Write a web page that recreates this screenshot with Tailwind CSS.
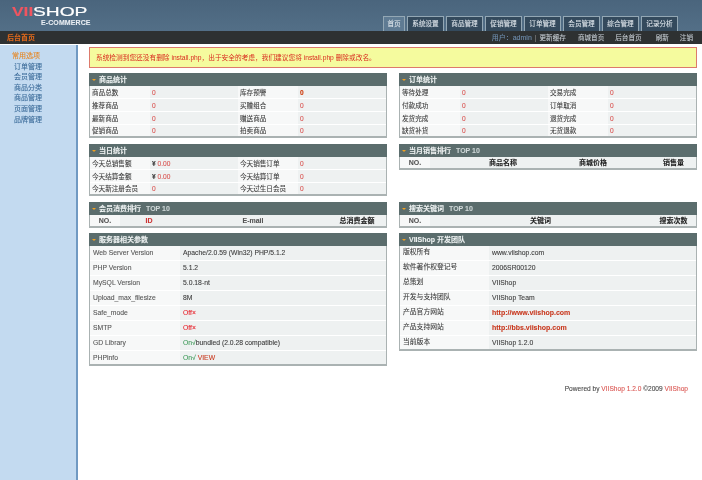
<!DOCTYPE html>
<html><head><meta charset="utf-8">
<script src="https://cdn.jsdelivr.net/npm/@tailwindcss/browser@4"></script>
</head>
<body class="w-[702px] h-[480px] overflow-hidden bg-white">
<div class="blur-[0.25px] [-webkit-text-stroke:0.08px] w-[702px] h-[480px] text-[#3a3a3a] text-[6.6px] leading-[13px] font-['Liberation_Sans','Noto_Sans_CJK_SC',sans-serif]">
<header class="h-[31px] bg-gradient-to-b from-[#4a657d] to-[#536f87] flex justify-between">
  <div class="pl-[12px] pt-[6px] w-[120px] font-bold leading-none">
    <div class="flex h-[12px] text-[12px] leading-[12px]"><span class="w-[21px] text-[#f05560] origin-left scale-x-[1.45]">VII</span><span class="text-white origin-left scale-x-[1.6] font-normal [-webkit-text-stroke:0.2px]">SHOP</span></div>
    <div class="text-[7px] text-[#e8edf2] pl-[29px] leading-[9px] tracking-[0.1px]">E-COMMERCE</div>
  </div>
  <nav class="flex items-end gap-[2px] pr-[24px] text-[#dfe6ec]">
    <div class="w-[22px] h-[15px] border border-b-0 border-[#93a7b4] bg-[#5f7b93] text-center leading-[14px]">首页</div>
    <div class="w-[37px] h-[15px] border border-b-0 border-[#93a7b4] bg-[#344a5d] text-center leading-[14px]">系统设置</div>
    <div class="w-[37px] h-[15px] border border-b-0 border-[#93a7b4] bg-[#344a5d] text-center leading-[14px]">商品管理</div>
    <div class="w-[37px] h-[15px] border border-b-0 border-[#93a7b4] bg-[#344a5d] text-center leading-[14px]">促销管理</div>
    <div class="w-[37px] h-[15px] border border-b-0 border-[#93a7b4] bg-[#344a5d] text-center leading-[14px]">订单管理</div>
    <div class="w-[37px] h-[15px] border border-b-0 border-[#93a7b4] bg-[#344a5d] text-center leading-[14px]">会员管理</div>
    <div class="w-[37px] h-[15px] border border-b-0 border-[#93a7b4] bg-[#344a5d] text-center leading-[14px]">综合管理</div>
    <div class="w-[37px] h-[15px] border border-b-0 border-[#93a7b4] bg-[#344a5d] text-center leading-[14px]">记录分析</div>
  </nav>
</header>
<div class="h-[13px] bg-[#2e3132] flex justify-between items-center pl-[7px] pr-[9px]">
  <span class="text-[#e0691c] font-bold text-[7px]">后台首页</span>
  <div class="flex text-[#c5ccd2]">
    <span class="text-[#6f8fb0] mr-[3px] text-[7px]">用户：admin</span><span class="text-[#888] mr-[3px]">|</span><span class="mr-[12px]">更新缓存</span><span class="mr-[11px]">商城首页</span><span class="mr-[14px]">后台首页</span><span class="mr-[11px]">刷新</span><span>注销</span>
  </div>
</div>
<div class="flex h-[436px]">
  <aside class="w-[78px] mt-[1px] bg-[#c3daf0] border-r-2 border-[#7099c2] pt-[6px] text-[7px] leading-[10.6px] text-[#3a6a98] shrink-0">
    <div class="pl-[12px] text-[#e8841c]">常用选项</div>
    <div class="pl-[14px]">订单管理</div>
    <div class="pl-[14px]">会员管理</div>
    <div class="pl-[14px]">商品分类</div>
    <div class="pl-[14px]">商品管理</div>
    <div class="pl-[14px]">页面管理</div>
    <div class="pl-[14px]">品牌管理</div>
  </aside>
  <main class="w-[624px] pl-[11px] pr-[5px] pt-[3px]">
    <div class="h-[21px] border border-[#dd7a6c] bg-[#f5fb9e] text-[#d92b1f] pl-[6px] leading-[19px] text-[6.7px] [-webkit-text-stroke:0px]">系统检测到您还没有删除 install.php，出于安全的考虑，我们建议您将 install.php 删除或改名。</div>

    <div class="grid grid-cols-[298px_298px] gap-x-[12px] mt-[5px] items-start">
      <section class="border-x border-b-2 border-[#aab2b2] h-[65px]">
        <h3 class="-mx-[1px] h-[13px] bg-[#5b6d6d] text-[#eef2f2] text-[7px] font-bold leading-[13px] pl-[3px] flex items-center gap-[3px]"><span class="w-0 h-0 border-x-[2px] border-t-[2px] border-x-transparent border-t-[#f0a020]"></span>商品统计</h3>
        <div class="grid grid-cols-[60px_88px_60px_88px] grid-rows-[13px_13px_13px_11px]">
          <div class="pl-[2px] bg-[#f7f8f8] border-b border-white">商品总数</div><div class="bg-[#eef1f1] text-[#d9534f] pl-[2px] border-b border-white">0</div><div class="pl-[2px] bg-[#f7f8f8] border-b border-white">库存预警</div><div class="bg-[#eef1f1] text-[#cc3300] font-bold pl-[2px] border-b border-white">0</div>
          <div class="pl-[2px] bg-[#f7f8f8] border-b border-white">推荐商品</div><div class="bg-[#eef1f1] text-[#d9534f] pl-[2px] border-b border-white">0</div><div class="pl-[2px] bg-[#f7f8f8] border-b border-white">买赠组合</div><div class="bg-[#eef1f1] text-[#d9534f] pl-[2px] border-b border-white">0</div>
          <div class="pl-[2px] bg-[#f7f8f8] border-b border-white">最新商品</div><div class="bg-[#eef1f1] text-[#d9534f] pl-[2px] border-b border-white">0</div><div class="pl-[2px] bg-[#f7f8f8] border-b border-white">赠送商品</div><div class="bg-[#eef1f1] text-[#d9534f] pl-[2px] border-b border-white">0</div>
          <div class="pl-[2px] bg-[#f7f8f8] leading-[11px]">促销商品</div><div class="bg-[#eef1f1] text-[#d9534f] pl-[2px] leading-[11px]">0</div><div class="pl-[2px] bg-[#f7f8f8] leading-[11px]">拍卖商品</div><div class="bg-[#eef1f1] text-[#d9534f] pl-[2px] leading-[11px]">0</div>
        </div>
      </section>
      <section class="border-x border-b-2 border-[#aab2b2] h-[65px]">
        <h3 class="-mx-[1px] h-[13px] bg-[#5b6d6d] text-[#eef2f2] text-[7px] font-bold leading-[13px] pl-[3px] flex items-center gap-[3px]"><span class="w-0 h-0 border-x-[2px] border-t-[2px] border-x-transparent border-t-[#f0a020]"></span>订单统计</h3>
        <div class="grid grid-cols-[60px_88px_60px_88px] grid-rows-[13px_13px_13px_11px]">
          <div class="pl-[2px] bg-[#f7f8f8] border-b border-white">等待处理</div><div class="bg-[#eef1f1] text-[#d9534f] pl-[2px] border-b border-white">0</div><div class="pl-[2px] bg-[#f7f8f8] border-b border-white">交易完成</div><div class="bg-[#eef1f1] text-[#d9534f] pl-[2px] border-b border-white">0</div>
          <div class="pl-[2px] bg-[#f7f8f8] border-b border-white">付款成功</div><div class="bg-[#eef1f1] text-[#d9534f] pl-[2px] border-b border-white">0</div><div class="pl-[2px] bg-[#f7f8f8] border-b border-white">订单取消</div><div class="bg-[#eef1f1] text-[#d9534f] pl-[2px] border-b border-white">0</div>
          <div class="pl-[2px] bg-[#f7f8f8] border-b border-white">发货完成</div><div class="bg-[#eef1f1] text-[#d9534f] pl-[2px] border-b border-white">0</div><div class="pl-[2px] bg-[#f7f8f8] border-b border-white">退货完成</div><div class="bg-[#eef1f1] text-[#d9534f] pl-[2px] border-b border-white">0</div>
          <div class="pl-[2px] bg-[#f7f8f8] leading-[11px]">缺货补货</div><div class="bg-[#eef1f1] text-[#d9534f] pl-[2px] leading-[11px]">0</div><div class="pl-[2px] bg-[#f7f8f8] leading-[11px]">无货退款</div><div class="bg-[#eef1f1] text-[#d9534f] pl-[2px] leading-[11px]">0</div>
        </div>
      </section>

      <section class="mt-[6px] border-x border-b-2 border-[#aab2b2] h-[52px]">
        <h3 class="-mx-[1px] h-[13px] bg-[#5b6d6d] text-[#eef2f2] text-[7px] font-bold leading-[13px] pl-[3px] flex items-center gap-[3px]"><span class="w-0 h-0 border-x-[2px] border-t-[2px] border-x-transparent border-t-[#f0a020]"></span>当日统计</h3>
        <div class="grid grid-cols-[60px_88px_60px_88px] grid-rows-[13px_13px_11px]">
          <div class="pl-[2px] bg-[#f7f8f8] border-b border-white">今天总销售额</div><div class="bg-[#eef1f1] text-[#d9534f] pl-[2px] border-b border-white"><b class="text-[#333]">¥</b> 0.00</div><div class="pl-[2px] bg-[#f7f8f8] border-b border-white">今天销售订单</div><div class="bg-[#eef1f1] text-[#d9534f] pl-[2px] border-b border-white">0</div>
          <div class="pl-[2px] bg-[#f7f8f8] border-b border-white">今天结算金额</div><div class="bg-[#eef1f1] text-[#d9534f] pl-[2px] border-b border-white"><b class="text-[#333]">¥</b> 0.00</div><div class="pl-[2px] bg-[#f7f8f8] border-b border-white">今天结算订单</div><div class="bg-[#eef1f1] text-[#d9534f] pl-[2px] border-b border-white">0</div>
          <div class="pl-[2px] bg-[#f7f8f8] leading-[11px]">今天新注册会员</div><div class="bg-[#eef1f1] text-[#d9534f] pl-[2px] leading-[11px]">0</div><div class="pl-[2px] bg-[#f7f8f8] leading-[11px]">今天过生日会员</div><div class="bg-[#eef1f1] text-[#d9534f] pl-[2px] leading-[11px]">0</div>
        </div>
      </section>
      <section class="mt-[6px] border-x border-b-2 border-[#aab2b2] h-[26px]">
        <h3 class="-mx-[1px] h-[13px] bg-[#5b6d6d] text-[#eef2f2] text-[7px] font-bold leading-[13px] pl-[3px] flex items-center gap-[3px]"><span class="w-0 h-0 border-x-[2px] border-t-[2px] border-x-transparent border-t-[#f0a020]"></span>当月销售排行<span class="ml-[2px] text-[#cfd8d8]">TOP 10</span></h3>
        <div class="grid grid-cols-[30px_146px_75px_45px] h-[11px] bg-[#eef1f1] text-center font-bold text-[7px] text-[#222] leading-[11px]">
          <div class="bg-[#f7f8f8] text-[#555]">NO.</div><div>商品名称</div><div class="text-left pl-[3px]">商城价格</div><div>销售量</div>
        </div>
      </section>

      <section class="mt-[6px] border-x border-b-2 border-[#aab2b2] h-[26px]">
        <h3 class="-mx-[1px] h-[13px] bg-[#5b6d6d] text-[#eef2f2] text-[7px] font-bold leading-[13px] pl-[3px] flex items-center gap-[3px]"><span class="w-0 h-0 border-x-[2px] border-t-[2px] border-x-transparent border-t-[#f0a020]"></span>会员消费排行<span class="ml-[2px] text-[#cfd8d8]">TOP 10</span></h3>
        <div class="grid grid-cols-[30px_58px_150px_58px] h-[11px] bg-[#eef1f1] text-center font-bold text-[7px] text-[#555] leading-[11px]">
          <div class="bg-[#f7f8f8]">NO.</div><div class="text-[#cc3333]">ID</div><div>E-mail</div><div class="text-[#222]">总消费金额</div>
        </div>
      </section>
      <section class="mt-[6px] border-x border-b-2 border-[#aab2b2] h-[26px]">
        <h3 class="-mx-[1px] h-[13px] bg-[#5b6d6d] text-[#eef2f2] text-[7px] font-bold leading-[13px] pl-[3px] flex items-center gap-[3px]"><span class="w-0 h-0 border-x-[2px] border-t-[2px] border-x-transparent border-t-[#f0a020]"></span>搜索关键词<span class="ml-[2px] text-[#cfd8d8]">TOP 10</span></h3>
        <div class="grid grid-cols-[30px_221px_45px] h-[11px] bg-[#eef1f1] text-center font-bold text-[7px] text-[#222] leading-[11px]">
          <div class="bg-[#f7f8f8] text-[#555]">NO.</div><div>关键词</div><div>搜索次数</div>
        </div>
      </section>

      <section class="mt-[5px] border-x border-b-2 border-[#aab2b2] h-[133px]">
        <h3 class="-mx-[1px] h-[13px] bg-[#5b6d6d] text-[#eef2f2] text-[7px] font-bold leading-[13px] pl-[3px] flex items-center gap-[3px]"><span class="w-0 h-0 border-x-[2px] border-t-[2px] border-x-transparent border-t-[#f0a020]"></span>服务器相关参数</h3>
        <div class="grid grid-cols-[90px_206px] grid-rows-[repeat(7,15px)_13px] leading-[14px] text-[6.8px]">
          <div class="pl-[3px] bg-[#f7f8f8] border-b border-white text-[#555]">Web Server Version</div><div class="pl-[3px] bg-[#eef1f1] border-b border-white">Apache/2.0.59 (Win32) PHP/5.1.2</div>
          <div class="pl-[3px] bg-[#f7f8f8] border-b border-white text-[#555]">PHP Version</div><div class="pl-[3px] bg-[#eef1f1] border-b border-white">5.1.2</div>
          <div class="pl-[3px] bg-[#f7f8f8] border-b border-white text-[#555]">MySQL Version</div><div class="pl-[3px] bg-[#eef1f1] border-b border-white">5.0.18-nt</div>
          <div class="pl-[3px] bg-[#f7f8f8] border-b border-white text-[#555]">Upload_max_filesize</div><div class="pl-[3px] bg-[#eef1f1] border-b border-white">8M</div>
          <div class="pl-[3px] bg-[#f7f8f8] border-b border-white text-[#555]">Safe_mode</div><div class="pl-[3px] bg-[#eef1f1] border-b border-white text-[#e8202a]">Off×</div>
          <div class="pl-[3px] bg-[#f7f8f8] border-b border-white text-[#555]">SMTP</div><div class="pl-[3px] bg-[#eef1f1] border-b border-white text-[#e8202a]">Off×</div>
          <div class="pl-[3px] bg-[#f7f8f8] border-b border-white text-[#555]">GD Library</div><div class="pl-[3px] bg-[#eef1f1] border-b border-white"><span class="text-[#3f9a5a]">On√</span>bundled (2.0.28 compatible)</div>
          <div class="pl-[3px] bg-[#f7f8f8] text-[#555]">PHPinfo</div><div class="pl-[3px] bg-[#eef1f1]"><span class="text-[#3f9a5a]">On√</span> <span class="text-[#c8381e]">VIEW</span></div>
        </div>
      </section>
      <section class="mt-[5px] border-x border-b-2 border-[#aab2b2] h-[118px]">
        <h3 class="-mx-[1px] h-[13px] bg-[#5b6d6d] text-[#eef2f2] text-[7px] font-bold leading-[13px] pl-[3px] flex items-center gap-[3px]"><span class="w-0 h-0 border-x-[2px] border-t-[2px] border-x-transparent border-t-[#f0a020]"></span>VIIShop 开发团队</h3>
        <div class="grid grid-cols-[89px_207px] grid-rows-[repeat(6,15px)_13px] leading-[14px] text-[6.8px]">
          <div class="pl-[3px] bg-[#f7f8f8] border-b border-white leading-[12px]">版权所有</div><div class="pl-[3px] bg-[#eef1f1] border-b border-white">www.viishop.com</div>
          <div class="pl-[3px] bg-[#f7f8f8] border-b border-white leading-[12px]">软件著作权登记号</div><div class="pl-[3px] bg-[#eef1f1] border-b border-white">2006SR00120</div>
          <div class="pl-[3px] bg-[#f7f8f8] border-b border-white leading-[12px]">总策划</div><div class="pl-[3px] bg-[#eef1f1] border-b border-white">VIIShop</div>
          <div class="pl-[3px] bg-[#f7f8f8] border-b border-white leading-[12px]">开发与支持团队</div><div class="pl-[3px] bg-[#eef1f1] border-b border-white">VIIShop Team</div>
          <div class="pl-[3px] bg-[#f7f8f8] border-b border-white leading-[12px]">产品官方网站</div><div class="pl-[3px] bg-[#eef1f1] border-b border-white text-[#c8381e] font-bold text-[7px]">http://www.viishop.com</div>
          <div class="pl-[3px] bg-[#f7f8f8] border-b border-white leading-[12px]">产品支持网站</div><div class="pl-[3px] bg-[#eef1f1] border-b border-white text-[#c8381e] font-bold text-[7px]">http://bbs.viishop.com</div>
          <div class="pl-[3px] bg-[#f7f8f8] leading-[12px]">当前版本</div><div class="pl-[3px] bg-[#eef1f1]">VIIShop 1.2.0</div>
        </div>
      </section>
    </div>
    <footer class="mt-[16px] text-right pr-[9px] text-[#444]">Powered by <span class="text-[#d9534f]">VIIShop 1.2.0</span> ©2009 <span class="text-[#d9534f]">VIIShop</span></footer>
  </main>
</div>
</div>
</body></html>
